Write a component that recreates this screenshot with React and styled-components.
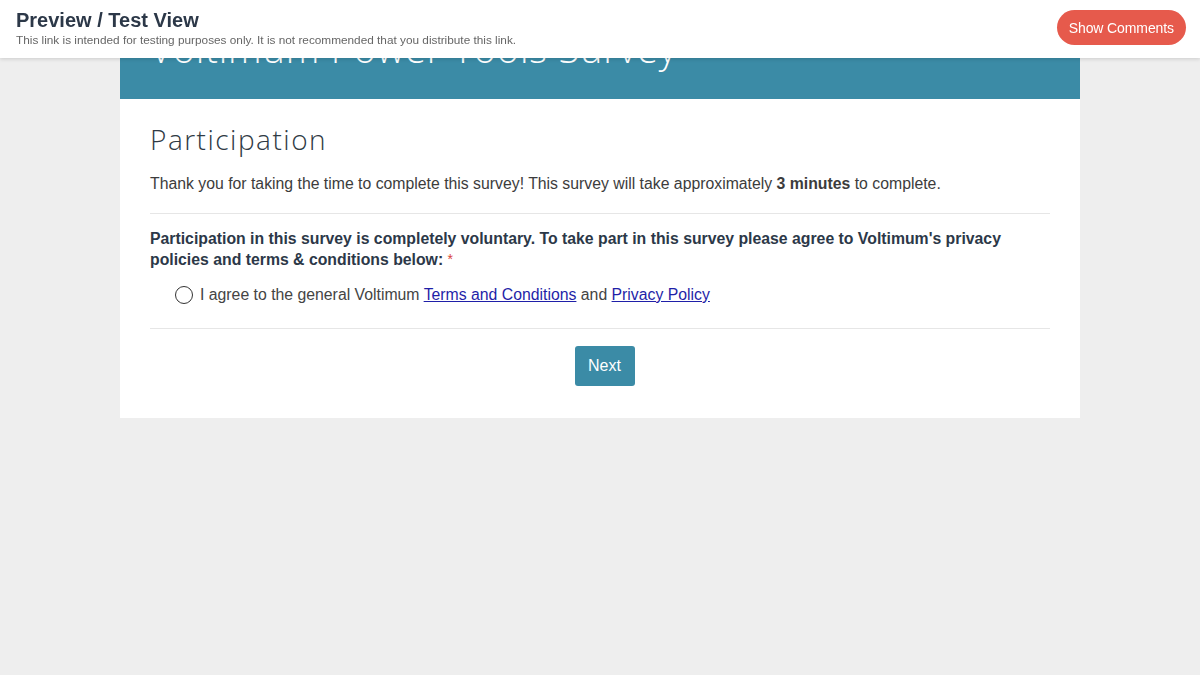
import React from "react";
import styled, { createGlobalStyle } from "styled-components";

const Global = createGlobalStyle`
  html, body { margin: 0; padding: 0; background: #eeeeee; }
  body { font-family: "Liberation Sans", Arial, sans-serif; }
  * { box-sizing: border-box; }
`;

const TopBar = styled.header`
  position: fixed;
  top: 0; left: 0; right: 0;
  height: 58px;
  background: #ffffff;
  box-shadow: 0 1px 4px rgba(0,0,0,0.15);
  display: flex;
  align-items: center;
  justify-content: space-between;
  padding: 0 14px 0 16px;
  z-index: 10;
`;

const TitleBlock = styled.div`
  display: flex;
  flex-direction: column;
  gap: 4px;
  margin-top: -2px;
`;

const PreviewTitle = styled.div`
  font-size: 20px;
  font-weight: 700;
  color: #2c3848;
  line-height: 20px;
`;

const PreviewSub = styled.div`
  font-size: 11.8px;
  color: #666;
  line-height: 13px;
`;

const CommentsButton = styled.button`
  background: #e65a4c;
  color: #fff;
  border: none;
  border-radius: 18px;
  height: 35px;
  padding: 0 12px;
  font-family: "Liberation Sans", Arial, sans-serif;
  font-size: 14px;
  letter-spacing: -0.1px;
  margin-top: -3px;
`;

const Card = styled.main`
  width: 960px;
  margin: 0 auto;
  background: #fff;
`;

const Banner = styled.div`
  height: 99px;
  background: #3b8ba6;
  display: flex;
  align-items: flex-end;
  padding: 0 30px 28px;
`;

const SurveyTitle = styled.h1`
  margin: 0;
  color: #fff;
  font-family: "Open Sans", sans-serif;
  font-weight: 300;
  font-size: 38px;
  line-height: 46px;
  letter-spacing: 0.8px;
`;

const Body = styled.section`
  padding: 22px 30px 32px;
`;

const SectionTitle = styled.h2`
  margin: 0 0 16px;
  font-family: "Open Sans", sans-serif;
  font-weight: 300;
  font-size: 28px;
  line-height: 36px;
  letter-spacing: 1.5px;
  color: #2f3a44;
`;

const Intro = styled.p`
  margin: 0;
  font-size: 15.8px;
  line-height: 22px;
  color: #3c3c3c;
  padding-bottom: 18px;
  border-bottom: 1px solid #e6e6e6;
`;

const Question = styled.div`
  padding: 14px 0 22px;
  border-bottom: 1px solid #e6e6e6;
`;

const QuestionText = styled.div`
  font-size: 15.8px;
  font-weight: 700;
  line-height: 21px;
  color: #2c3848;
`;

const Required = styled.span`
  color: #d9453a;
  font-weight: 400;
  font-size: 14px;
  vertical-align: top;
`;

const Option = styled.label`
  display: flex;
  align-items: center;
  gap: 7px;
  margin: 14px 0 0 25px;
  font-size: 15.8px;
  color: #444;
  line-height: 22px;
`;

const Radio = styled.span`
  width: 18px;
  height: 18px;
  border: 1.6px solid #333;
  border-radius: 50%;
  flex: none;
`;

const Link = styled.a`
  color: #1f1fa8;
  text-decoration: underline;
`;

const Actions = styled.div`
  display: flex;
  justify-content: center;
  padding-top: 17px;
  padding-left: 9px;
`;

const NextButton = styled.button`
  background: #3b8ba6;
  color: #fff;
  border: none;
  border-radius: 3px;
  width: 60px;
  height: 40px;
  font-family: "Liberation Sans", Arial, sans-serif;
  font-size: 16px;
`;

export default function App() {
  return (
    <>
      <Global />
      <TopBar>
        <TitleBlock>
          <PreviewTitle>Preview / Test View</PreviewTitle>
          <PreviewSub>This link is intended for testing purposes only. It is not recommended that you distribute this link.</PreviewSub>
        </TitleBlock>
        <CommentsButton>Show Comments</CommentsButton>
      </TopBar>
      <Card>
        <Banner>
          <SurveyTitle>Voltimum Power Tools Survey</SurveyTitle>
        </Banner>
        <Body>
          <SectionTitle>Participation</SectionTitle>
          <Intro>
            Thank you for taking the time to complete this survey! This survey will take approximately <b>3 minutes</b> to complete.
          </Intro>
          <Question>
            <QuestionText>
              Participation in this survey is completely voluntary. To take part in this survey please agree to Voltimum's privacy policies and terms &amp; conditions below: <Required>*</Required>
            </QuestionText>
            <Option>
              <Radio />
              <span>
                I agree to the general Voltimum <Link href="#">Terms and Conditions</Link> and <Link href="#">Privacy Policy</Link>
              </span>
            </Option>
          </Question>
          <Actions>
            <NextButton>Next</NextButton>
          </Actions>
        </Body>
      </Card>
    </>
  );
}
